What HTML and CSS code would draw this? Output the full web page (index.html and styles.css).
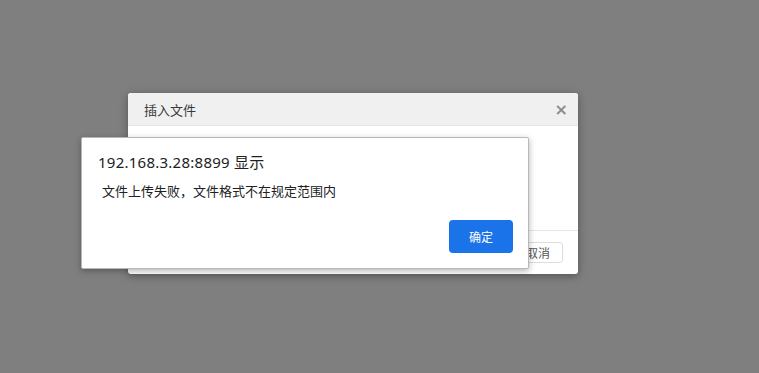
FILE: index.html
```html
<!DOCTYPE html>
<html lang="zh">
<head>
<meta charset="utf-8">
<link rel="stylesheet" href="styles.css">
</head>
<body>
<div class="overlay">
  <div class="modal">
    <div class="modal-header">
      <span class="modal-title">插入文件</span>
      <span class="close">×</span>
    </div>
    <div class="modal-body"></div>
    <div class="modal-footer">
      <button class="btn-cancel">取消</button>
    </div>
  </div>
  <div class="alert">
    <div class="alert-title">192.168.3.28:8899 显示</div>
    <div class="alert-msg">文件上传失败，文件格式不在规定范围内</div>
    <div class="alert-actions">
      <button class="btn-ok">确定</button>
    </div>
  </div>
</div>
</body>
</html>
```

FILE: styles.css
```css
html, body {
  margin: 0;
  padding: 0;
  width: 759px;
  height: 373px;
  overflow: hidden;
}
body {
  background: #7f7f7f;
  font-family: "Noto Sans", "Noto Sans CJK SC", sans-serif;
}
.overlay {
  position: relative;
  width: 759px;
  height: 373px;
}
.modal {
  position: absolute;
  left: 128px;
  top: 93px;
  width: 450px;
  height: 181px;
  background: #fff;
  border-radius: 3px;
  box-shadow: 0 2px 8px rgba(0,0,0,0.35);
  display: flex;
  flex-direction: column;
  overflow: hidden;
}
.modal-header {
  height: 33px;
  background: #f0f0f0;
  border-bottom: 1px solid #e6e6e6;
  display: flex;
  align-items: center;
  justify-content: space-between;
  padding: 0 10px 0 16px;
  box-sizing: border-box;
  flex-shrink: 0;
}
.modal-title {
  font-family: "Noto Sans CJK SC", sans-serif;
  font-size: 13px;
  color: #3a3a3a;
}
.close {
  font-family: "DejaVu Sans", sans-serif;
  font-size: 16px;
  font-weight: bold;
  color: #8c8c8c;
  line-height: 1;
  margin-top: 2px;
}
.modal-body {
  flex: 1;
}
.modal-footer {
  height: 44px;
  border-top: 1px solid #e5e5e5;
  display: flex;
  justify-content: flex-end;
  align-items: flex-start;
  padding: 11px 15px 0 0;
  box-sizing: border-box;
  flex-shrink: 0;
}
.btn-cancel {
  width: 50px;
  height: 21px;
  border: 1px solid #ddd;
  border-radius: 3px;
  background: #fff;
  font-family: "Noto Sans CJK SC", sans-serif;
  font-size: 12px;
  color: #555;
  padding: 0;
  line-height: 19px;
}
.alert {
  position: absolute;
  left: 81px;
  top: 137px;
  width: 448px;
  height: 132px;
  box-sizing: border-box;
  background: #fff;
  border: 1px solid #b8b8b8;
  border-radius: 2px;
  box-shadow: 0 2px 6px rgba(0,0,0,0.3);
  padding: 14px 15px 0 16px;
}
.alert-title {
  font-size: 15px;
  letter-spacing: 0.25px;
  color: #202124;
  line-height: 20px;
}
.alert-msg {
  font-family: "Noto Sans CJK SC", sans-serif;
  font-size: 13px;
  color: #202124;
  margin-top: 10px;
  padding-left: 4px;
  line-height: 18px;
}
.alert-actions {
  display: flex;
  justify-content: flex-end;
  margin-top: 20px;
}
.btn-ok {
  width: 64px;
  height: 33px;
  border: none;
  border-radius: 4px;
  background: #1a73e8;
  color: #fff;
  font-family: "Noto Sans CJK SC", sans-serif;
  font-size: 12px;
  padding: 0;
}
```
